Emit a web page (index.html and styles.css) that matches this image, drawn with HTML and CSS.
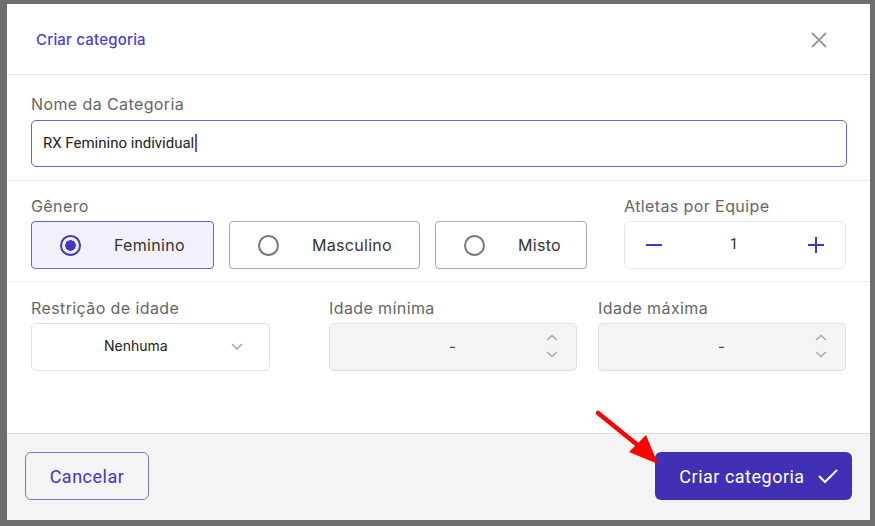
FILE: index.html
```html
<!DOCTYPE html>
<html lang="pt">
<head>
<meta charset="utf-8">
<link rel="stylesheet" href="styles.css">
</head>
<body>
<div class="modal">
  <div class="header">
    <span class="title">Criar categoria</span>
    <svg class="close" width="18" height="18" viewBox="0 0 18 18"><path d="M2 2 L16 16 M16 2 L2 16" stroke="#9a9a9a" stroke-width="2" fill="none"/></svg>
  </div>
  <div class="body">
    <div class="section s1">
      <div class="label">Nome da Categoria</div>
      <div class="input name">RX Feminino individual<span class="caret"></span></div>
    </div>
    <div class="section s2">
      <div class="genero">
        <div class="label">Gênero</div>
        <div class="radios">
          <div class="radio selected w1"><span class="dot"></span><span>Feminino</span></div>
          <div class="radio w2"><span class="dot"></span><span>Masculino</span></div>
          <div class="radio w3"><span class="dot"></span><span>Misto</span></div>
        </div>
      </div>
      <div class="atletas">
        <div class="label">Atletas por Equipe</div>
        <div class="stepper">
          <svg width="18" height="18" viewBox="0 0 18 18"><path d="M1 9 H17" stroke="#4535c4" stroke-width="2"/></svg>
          <span class="num">1</span>
          <svg width="18" height="18" viewBox="0 0 18 18"><path d="M1 9 H17 M9 1 V17" stroke="#4535c4" stroke-width="2"/></svg>
        </div>
      </div>
    </div>
    <div class="section s3">
      <div class="col c1">
        <div class="label">Restrição de idade</div>
        <div class="select">
          <span>Nenhuma</span>
          <svg class="chev" width="14" height="10" viewBox="0 0 14 10"><path d="M2 3 L7 8 L12 3" stroke="#aaaaaa" stroke-width="1.6" fill="none"/></svg>
        </div>
      </div>
      <div class="col c2">
        <div class="label">Idade mínima</div>
        <div class="numinput">
          <span>-</span>
          <svg class="spin" width="14" height="26" viewBox="0 0 14 26"><path d="M2 7 L7 2.5 L12 7 M2 19 L7 23.5 L12 19" stroke="#aaaaaa" stroke-width="1.6" fill="none"/></svg>
        </div>
      </div>
      <div class="col c3">
        <div class="label">Idade máxima</div>
        <div class="numinput">
          <span>-</span>
          <svg class="spin" width="14" height="26" viewBox="0 0 14 26"><path d="M2 7 L7 2.5 L12 7 M2 19 L7 23.5 L12 19" stroke="#aaaaaa" stroke-width="1.6" fill="none"/></svg>
        </div>
      </div>
    </div>
  </div>
  <div class="footer">
    <button class="btn cancel">Cancelar</button>
    <button class="btn primary">Criar categoria
      <svg width="22" height="18" viewBox="0 0 22 18"><path d="M2 9 L8 15 L20 3" stroke="#ffffff" stroke-width="2" fill="none"/></svg>
    </button>
  </div>
  <svg class="arrow" width="80" height="70" viewBox="0 0 80 70">
    <path d="M4 4 L46 38" stroke="#ff0000" stroke-width="4.5" stroke-linecap="round" fill="none"/>
    <path d="M35 43 L52 26 L64 55 Z" fill="#ff0000"/>
  </svg>
</div>
</body>
</html>
```
FILE: styles.css
```css
* { box-sizing: border-box; }
html, body { margin: 0; padding: 0; }
body {
  background: #6e6e6e;
  width: 875px;
  height: 526px;
  overflow: hidden;
  font-family: Inter, "Noto Sans", sans-serif;
}
.modal {
  position: relative;
  margin: 4px 0 0 7px;
  width: 863px;
  height: 516px;
  background: #ffffff;
  display: flex;
  flex-direction: column;
}
.header {
  height: 71px;
  border-bottom: 1px solid #e2e2e2;
  display: flex;
  align-items: center;
  justify-content: space-between;
  padding: 0 42px 0 29px;
}
.title {
  font-family: Inter, sans-serif;
  font-size: 15px;
  font-weight: 500;
  letter-spacing: 0.2px;
  color: #4b3fcf;
}
.close { margin-top: 1px; }
.body { flex: 1; }
.section {
  padding: 0 23px 0 24px;
  border-bottom: 1px solid #f2f2f2;
}
.s1 { padding-top: 19px; padding-bottom: 13px; }
.s2 { padding-top: 15px; padding-bottom: 12px; display: flex; justify-content: space-between; }
.s3 { padding-top: 16px; border-bottom: none; display: flex; }
.label {
  font-size: 16px;
  line-height: 20px;
  letter-spacing: 0.4px;
  color: #666666;
  margin-bottom: 6px;
}
.s2 .label, .s3 .label { margin-bottom: 5px; }
.input.name {
  height: 47px;
  border: 1px solid #6b60d6;
  border-radius: 5px;
  display: flex;
  align-items: center;
  padding-left: 11px;
  padding-bottom: 2px;
  font-family: Roboto, sans-serif;
  font-size: 15px;
  color: #222222;
}
.caret {
  display: inline-block;
  width: 2px;
  height: 18px;
  background: #4a5ed8;
  margin-left: 1px;
}
.radios { display: flex; gap: 15px; }
.radio {
  height: 48px;
  border: 1px solid #a9a9a9;
  border-radius: 4px;
  display: flex;
  align-items: center;
  padding-left: 28px;
  gap: 33px;
  font-size: 16px;
  letter-spacing: 0.3px;
  color: #333333;
}
.w1 { width: 183px; }
.w2 { width: 191px; }
.w3 { width: 152px; }
.radio .dot {
  width: 21px;
  height: 21px;
  border: 2px solid #777777;
  border-radius: 50%;
  flex: none;
}
.radio.selected {
  border-color: #6a5fd3;
  background: #f1f0fb;
}
.radio.selected .dot {
  border: 2px solid #4535c4;
  background: radial-gradient(circle, #4535c4 0 5px, #f1f0fb 5.5px);
}
.atletas { width: 222px; margin-right: 1px; }
.stepper {
  height: 48px;
  border: 1px solid #e6e6e6;
  border-radius: 6px;
  display: flex;
  align-items: center;
  justify-content: space-between;
  padding: 0 20px 0 20px;
}
.stepper .num {
  font-family: Roboto, sans-serif;
  font-size: 15px;
  color: #333333;
  margin-right: 2px;
  margin-bottom: 2px;
}
.c1 { width: 239px; margin-right: 59px; }
.c2 { width: 248px; margin-right: 21px; }
.c3 { width: 248px; }
.select {
  height: 48px;
  border: 1px solid #e2e2e2;
  border-radius: 5px;
  display: flex;
  align-items: center;
  padding-left: 72px;
  padding-bottom: 3px;
  font-size: 14px;
  color: #222222;
  position: relative;
}
.select .chev { margin-left: 62px; }
.numinput {
  height: 48px;
  background: #f4f4f4;
  border: 1px solid #e0e0e0;
  border-radius: 5px;
  display: flex;
  align-items: center;
  justify-content: space-between;
  padding: 0 17px 2px 119px;
  font-size: 15px;
  color: #444444;
}
.footer {
  height: 87px;
  border-top: 1px solid #dcdcdc;
  background: #f4f4f4;
  display: flex;
  align-items: center;
  justify-content: space-between;
  padding: 0 18px 0 18px;
}
.btn {
  height: 48px;
  border-radius: 6px;
  font-family: Roboto, sans-serif;
  font-size: 18px;
  letter-spacing: 0.5px;
  cursor: pointer;
  margin-top: -2px;
}
.cancel {
  width: 124px;
  background: transparent;
  border: 1px solid #7d72da;
  color: #4535c4;
}
.primary {
  width: 197px;
  background: #4030b4;
  border: none;
  color: #ffffff;
  display: flex;
  align-items: center;
  justify-content: center;
  gap: 12px;
  padding-left: 17px;
}
.arrow {
  position: absolute;
  left: 587px;
  top: 405px;
}
```
